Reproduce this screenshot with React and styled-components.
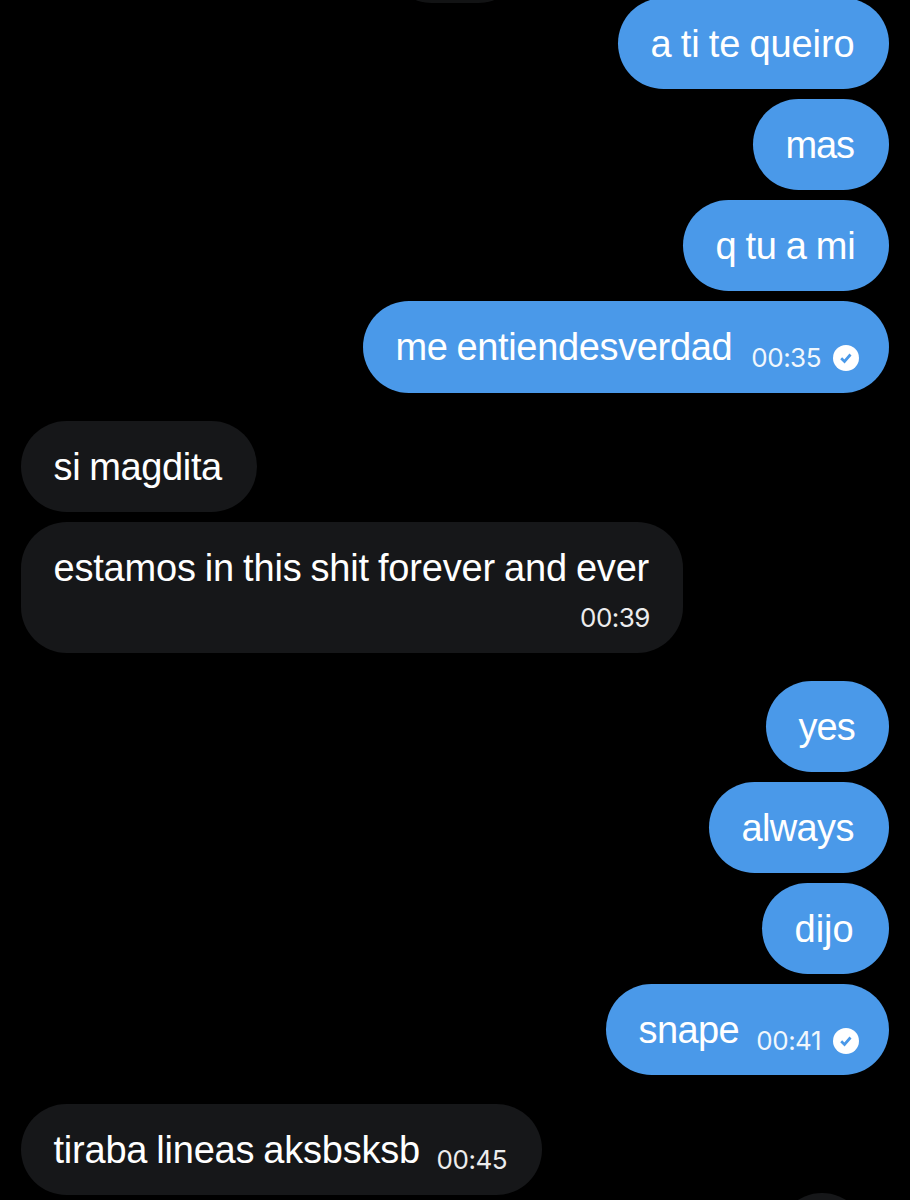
import React from 'react'
import styled, { createGlobalStyle } from 'styled-components'

const GlobalStyle = createGlobalStyle`
  body {
    margin: 0;
    background: #000;
  }
`
const Screen = styled.div`
  position: relative;
  box-sizing: border-box;
  width: 910px;
  height: 1200px;
  padding: 0 21px;
  overflow: hidden;
  background: #000;
  color: #fff;
  font-family: "Liberation Sans", Arial, sans-serif;
`
const Thread = styled.div`
  display: flex;
  flex-direction: column;
  gap: 28.1px;
  margin-top: -2px;
`
const Group = styled.div`
  display: flex;
  flex-direction: column;
  align-items: ${({ $mine }) => ($mine ? 'flex-end' : 'flex-start')};
  gap: 9.8px;
`
const Bubble = styled.div`
  box-sizing: border-box;
  display: flex;
  flex-direction: ${({ $stacked }) => ($stacked ? 'column' : 'row')};
  justify-content: ${({ $stacked }) => ($stacked ? 'flex-start' : 'space-between')};
  width: ${({ $width }) => $width}px;
  height: ${({ $stacked }) => ($stacked ? 131 : 91.3)}px;
  padding: 21px 33px 0 32.5px;
  padding-right: ${({ $mine, $timed, $stacked }) => ($timed && !$stacked ? ($mine ? 30 : 35) : 33)}px;
  border-radius: 46px;
  background: ${({ $mine }) => ($mine ? '#4a99e9' : '#161719')};
`
const Text = styled.span`
  font-size: 38px;
  line-height: 51px;
  letter-spacing: ${({ $track }) => $track}px;
  word-spacing: -1.3px;
  white-space: nowrap;
`
const Meta = styled.div`
  display: flex;
  align-items: center;
  align-self: flex-end;
  gap: 12px;
  height: 34px;
  margin-top: ${({ $stacked }) => ($stacked ? 7.4 : 0)}px;
  margin-bottom: ${({ $stacked }) => ($stacked ? 0 : 17.4)}px;
`
const Time = styled.span`
  font-family: Inter, sans-serif;
  font-size: 26px;
  line-height: 34px;
  font-weight: 400;
  letter-spacing: -0.5px;
  opacity: 0.92;
`
const Check = styled.svg`
  display: block;
  width: 26px;
  height: 26px;
`
const DatePill = styled.div`
  position: absolute;
  top: -42px;
  left: 400px;
  width: 110px;
  height: 45px;
  border-radius: 32px / 23px;
  background: #121314;
`
const ScrollButton = styled.div`
  position: absolute;
  top: 1193px;
  left: 777px;
  width: 90px;
  height: 90px;
  border-radius: 50%;
  background: #161719;
`

const groups = [
  {
    mine: true,
    messages: [
      { text: 'a ti te queiro', width: 271, track: -0.08 },
      { text: 'mas', width: 136, track: -1.1 },
      { text: 'q tu a mi', width: 206, track: -0.2 },
      { text: 'me entiendesverdad', width: 526, track: -0.35, time: '00:35' },
    ],
  },
  {
    mine: false,
    messages: [
      { text: 'si magdita', width: 236, track: -0.35 },
      { text: 'estamos in this shit forever and ever', width: 662, track: -0.19, time: '00:39', stacked: true },
    ],
  },
  {
    mine: true,
    messages: [
      { text: 'yes', width: 123, track: -1 },
      { text: 'always', width: 180, track: -0.65 },
      { text: 'dijo', width: 127, track: 0 },
      { text: 'snape', width: 283, track: -0.6, time: '00:41' },
    ],
  },
  {
    mine: false,
    messages: [
      { text: 'tiraba lineas aksbsksb', width: 521, track: -0.22, time: '00:45' },
    ],
  },
]

const SeenIcon = () => (
  <Check viewBox="0 0 26 26">
    <circle cx="13" cy="13" r="13" fill="#fff" />
    <path d="M8.2 13.2l3.3 3.3 6-7" fill="none" stroke="#4a99e9" strokeWidth="2.7" />
  </Check>
)

const Message = ({ text, width, track, time, stacked, mine }) => (
  <Bubble $mine={mine} $width={width} $stacked={stacked} $timed={!!time}>
    <Text $track={track}>{text}</Text>
    {time && (
      <Meta $stacked={stacked}>
        <Time>{time}</Time>
        {mine && <SeenIcon />}
      </Meta>
    )}
  </Bubble>
)

const App = () => {
  return (
    <Screen>
      <GlobalStyle />
      <DatePill />
      <Thread>
        {groups.map((group, i) => (
          <Group key={i} $mine={group.mine}>
            {group.messages.map((message) => (
              <Message key={message.text} mine={group.mine} {...message} />
            ))}
          </Group>
        ))}
      </Thread>
      <ScrollButton />
    </Screen>
  )
}

export default App
